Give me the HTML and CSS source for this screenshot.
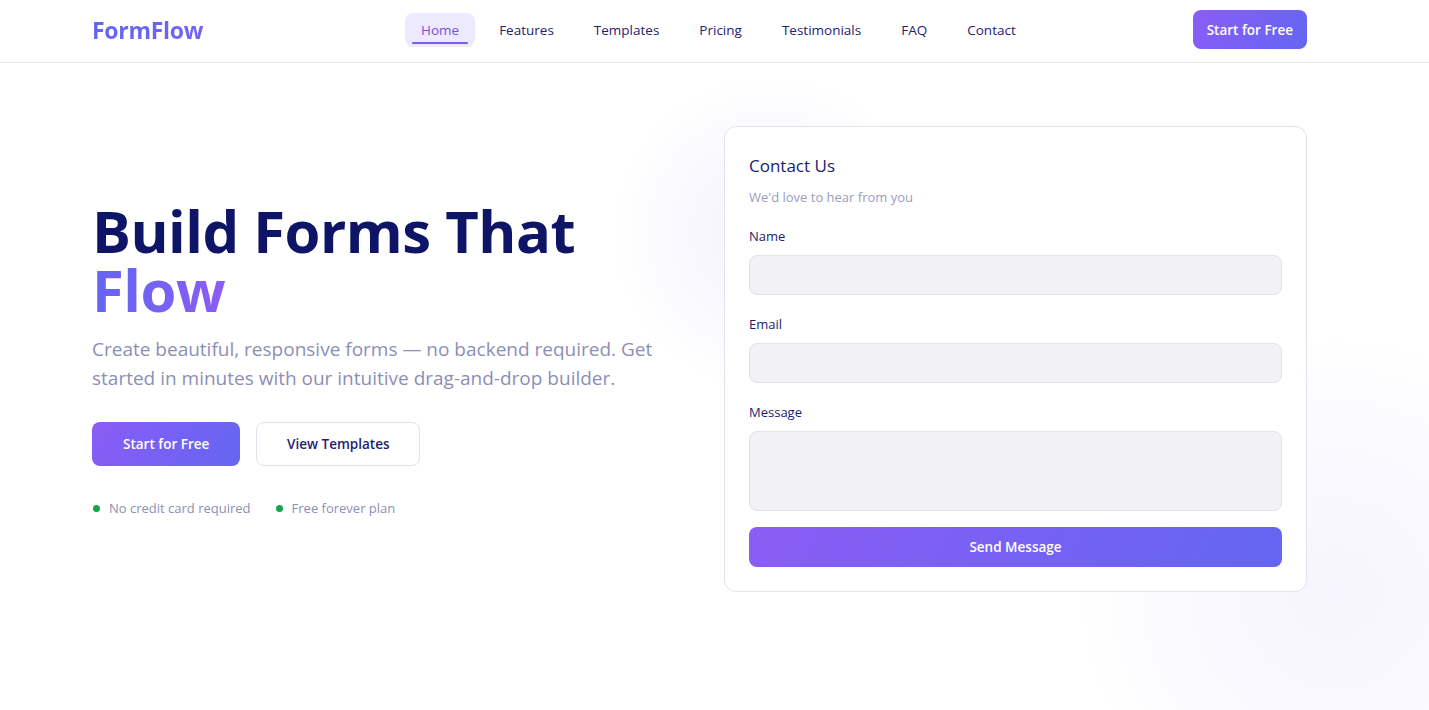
FILE: index.html
```html
<!DOCTYPE html>
<html lang="en">
<head>
<meta charset="utf-8">
<title>FormFlow</title>
<link rel="stylesheet" href="styles.css">
</head>
<body>
<header class="topbar">
  <div class="topbar-inner">
    <a class="logo" href="#">FormFlow</a>
    <nav class="nav">
      <a class="nav-link active" href="#">Home</a>
      <a class="nav-link" href="#">Features</a>
      <a class="nav-link" href="#">Templates</a>
      <a class="nav-link" href="#">Pricing</a>
      <a class="nav-link" href="#">Testimonials</a>
      <a class="nav-link" href="#">FAQ</a>
      <a class="nav-link" href="#">Contact</a>
    </nav>
    <a class="btn btn-primary btn-nav" href="#">Start for Free</a>
  </div>
</header>
<main class="hero">
  <div class="blob blob-a"></div>
  <div class="blob blob-b"></div>
  <div class="hero-inner">
    <div class="hero-copy">
      <h1 class="hero-title">Build Forms That <span class="grad-text">Flow</span></h1>
      <p class="hero-sub">Create beautiful, responsive forms — no backend required. Get started in minutes with our intuitive drag-and-drop builder.</p>
      <div class="hero-actions">
        <a class="btn btn-primary btn-lg" href="#">Start for Free</a>
        <a class="btn btn-outline btn-lg" href="#">View Templates</a>
      </div>
      <ul class="perks">
        <li class="perk"><span class="dot"></span>No credit card required</li>
        <li class="perk"><span class="dot"></span>Free forever plan</li>
      </ul>
    </div>
    <form class="card">
      <h2 class="card-title">Contact Us</h2>
      <p class="card-sub">We'd love to hear from you</p>
      <label class="field">
        <span class="field-label">Name</span>
        <input class="input" type="text">
      </label>
      <label class="field">
        <span class="field-label">Email</span>
        <input class="input" type="email">
      </label>
      <label class="field">
        <span class="field-label">Message</span>
        <textarea class="input textarea"></textarea>
      </label>
      <button class="btn btn-primary btn-block" type="button">Send Message</button>
    </form>
  </div>
</main>
</body>
</html>
```
FILE: styles.css
```css
* { box-sizing: border-box; }
html, body { margin: 0; padding: 0; }
body {
  font-family: "Open Sans", "Noto Sans", sans-serif;
  background: #ffffff;
  color: #13176b;
  width: 1429px;
  height: 710px;
  overflow: hidden;
}
a { text-decoration: none; }

.topbar {
  height: 63px;
  border-bottom: 1px solid #e6e6ef;
  background: #fff;
  position: relative;
  z-index: 2;
}
.topbar-inner {
  height: 62px;
  margin-left: 92px;
  width: 1215px;
  display: flex;
  align-items: center;
  justify-content: space-between;
}
.logo {
  font-size: 23px;
  font-weight: 700;
  letter-spacing: -0.3px;
  background: linear-gradient(90deg, #6366f1, #8b5cf6);
  -webkit-background-clip: text;
  background-clip: text;
  color: transparent;
  width: 300px;
  margin-top: -2px;
}
.nav {
  display: flex;
  gap: 8px;
  align-items: center;
  margin-left: 13px;
  margin-top: -2px;
}
.nav-link {
  font-size: 13.5px;
  font-weight: 500;
  color: #1f2270;
  padding: 8px 16px;
  line-height: 18px;
  border-radius: 8px;
  position: relative;
}
.nav-link.active {
  background: #ede9fe;
  color: #7c4ddb;
}
.nav-link.active::after {
  content: "";
  position: absolute;
  left: 7px;
  right: 7px;
  bottom: 3px;
  height: 2px;
  border-radius: 2px;
  background: #7c5cf0;
}

.btn {
  display: inline-flex;
  align-items: center;
  justify-content: center;
  font-family: inherit;
  font-weight: 600;
  font-size: 13.5px;
  border-radius: 8px;
  border: 0;
  cursor: pointer;
  white-space: nowrap;
}
.btn-primary {
  background: linear-gradient(120deg, #8b5cf6, #6366f1);
  color: #fff;
}
.btn-nav {
  height: 39px;
  padding: 0 14px;
  margin-left: auto;
  margin-top: -3px;
}
.btn-lg {
  height: 44px;
  padding: 0 31px;
}
.btn-outline {
  background: #fff;
  border: 1px solid #e2e2ec;
  color: #1f2270;
  width: 164px;
  padding: 0;
}
.btn-block {
  width: 100%;
  height: 40px;
  margin-top: 16px;
}

.hero {
  position: relative;
  height: 647px;
  overflow: hidden;
}
.blob {
  position: absolute;
  border-radius: 50%;
  pointer-events: none;
}
.blob-a {
  width: 320px;
  height: 320px;
  left: 610px;
  top: 10px;
  background: radial-gradient(circle, rgba(139, 127, 246, 0.1) 0%, rgba(139, 127, 246, 0.045) 45%, rgba(139, 127, 246, 0) 70%);
}
.blob-b {
  width: 520px;
  height: 520px;
  left: 1075px;
  top: 270px;
  background: radial-gradient(circle, rgba(139, 127, 246, 0.08) 0%, rgba(139, 127, 246, 0.04) 45%, rgba(139, 127, 246, 0) 70%);
}
.hero-inner {
  position: relative;
  margin-left: 92px;
  width: 1215px;
  padding-top: 63px;
  display: grid;
  grid-template-columns: 1fr 1fr;
  gap: 49px;
  align-items: center;
}
.hero-title {
  margin: 0;
  font-size: 58px;
  line-height: 59px;
  font-weight: 700;
  letter-spacing: -0.5px;
  color: #0e1466;
}
.grad-text {
  background: linear-gradient(90deg, #6366f1, #8b5cf6);
  -webkit-background-clip: text;
  background-clip: text;
  color: transparent;
}
.hero-sub {
  margin: 16px 0 0;
  font-size: 19px;
  line-height: 29px;
  color: #8c8fb5;
  max-width: 570px;
}
.hero-actions {
  display: flex;
  gap: 16px;
  margin-top: 29px;
}
.perks {
  list-style: none;
  padding: 0;
  margin: 33px 0 0;
  display: flex;
  gap: 24px;
}
.perk {
  display: flex;
  align-items: center;
  gap: 9px;
  font-size: 13px;
  color: #8c8fb5;
  padding-left: 1px;
}
.dot {
  width: 7px;
  height: 7px;
  border-radius: 50%;
  background: #16a34a;
}

.card {
  background: #fff;
  border: 1px solid #e3e3ee;
  border-radius: 12px;
  padding: 24px 24px 24px;
  display: flex;
  flex-direction: column;
}
.card-title {
  margin: 0;
  font-size: 17px;
  line-height: 30px;
  font-weight: 500;
  color: #1a1d6e;
}
.card-sub {
  margin: 6px 0 0;
  font-size: 13px;
  line-height: 20px;
  color: #9a9cc0;
}
.field {
  display: flex;
  flex-direction: column;
  margin-top: 19px;
}
.field + .field { margin-top: 19px; }
.field-label {
  font-size: 13px;
  font-weight: 500;
  line-height: 20px;
  color: #1a1d6e;
  margin-bottom: 9px;
}
.input {
  height: 40px;
  background: #f1f1f6;
  border: 1px solid #e2e2ea;
  border-radius: 8px;
  font-family: inherit;
  width: 100%;
  margin: 0;
}
.textarea {
  height: 80px;
  resize: none;
  display: block;
}
```
